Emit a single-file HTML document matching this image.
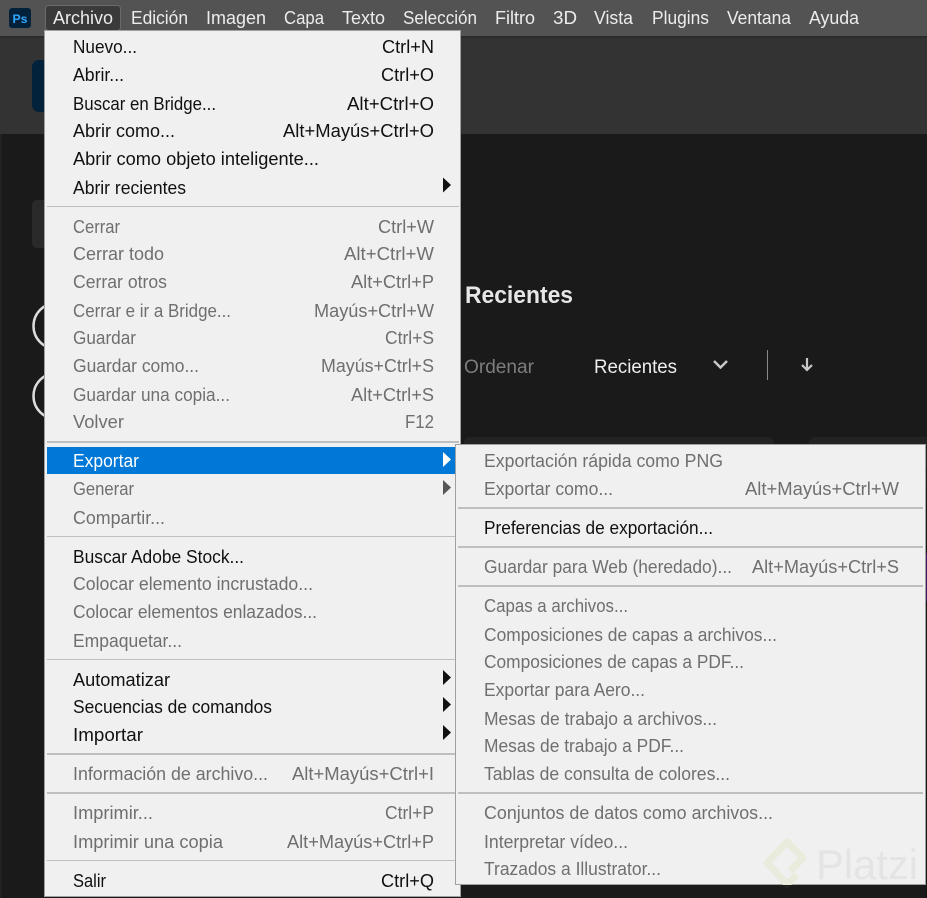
<!DOCTYPE html>
<html><head><meta charset="utf-8"><style>
html,body{margin:0;padding:0;background:#1a1a1a}
svg{display:block}
text{font-family:"Liberation Sans",sans-serif;font-size:18px}
.m text{fill:#ececec;font-size:18px}
.e{fill:#111}
.d{fill:#6f6f6f}
.w{fill:#fff}
</style></head><body>
<svg width="927" height="898" viewBox="0 0 927 898" xmlns="http://www.w3.org/2000/svg">
<defs>
<clipPath id="lt"><rect x="750" y="830" width="170" height="55"/></clipPath>
<clipPath id="dk"><rect x="750" y="886" width="170" height="12"/></clipPath>
</defs>
<rect width="927" height="898" fill="#1a1a1a"/>
<rect x="0" y="134" width="2" height="764" fill="#222"/>
<rect y="0" width="927" height="36" fill="#535353"/>
<rect y="36" width="927" height="98" fill="#333"/>
<rect y="36" width="927" height="2" fill="#2b2b2b"/>
<rect x="32" y="60" width="40" height="52" rx="7" fill="#02223c"/>
<rect x="32" y="200" width="40" height="48" rx="5" fill="#2a2a2a"/>
<circle cx="56.500" cy="326" r="23" fill="none" stroke="#dcdcdc" stroke-width="2.500"/>
<circle cx="56.500" cy="396" r="23" fill="none" stroke="#dcdcdc" stroke-width="2.500"/>
<rect x="464" y="437" width="310" height="30" rx="6" fill="#232323"/>
<rect x="809" y="437" width="130" height="30" rx="6" fill="#232323"/>
<rect x="926" y="486" width="1" height="412" fill="#141414"/>
<rect x="925" y="553" width="2" height="48" fill="#3a1a5a"/>
<text x="465" y="303" font-weight="bold" textLength="108" lengthAdjust="spacingAndGlyphs" style="font-size:24px" fill="#e6e6e6">Recientes</text>
<text x="464" y="373" textLength="70" lengthAdjust="spacingAndGlyphs" style="font-size:19px" fill="#7d7d7d">Ordenar</text>
<text x="594" y="373" textLength="83" lengthAdjust="spacingAndGlyphs" style="font-size:19px" fill="#eee">Recientes</text>
<path d="M714 361l6.500 6.500 6.500-6.500" fill="none" stroke="#c8c8c8" stroke-width="2.500"/>
<rect x="767" y="350" width="1" height="30" fill="#8a8a8a"/>
<path d="M807 358v12M802 365l5 5 5-5" fill="none" stroke="#c8c8c8" stroke-width="2.200"/>

<rect x="9" y="8" width="22" height="20" rx="3" fill="#02223c"/>
<text x="12.500" y="23" font-weight="bold" textLength="15" lengthAdjust="spacingAndGlyphs" style="font-size:12px" fill="#31a8ff">Ps</text>
<rect x="45.500" y="5.500" width="75" height="25" rx="3" fill="#3a3a3a" stroke="#6a6a6a"/>
<g class="m">
<text x="53" y="24" textLength="60" lengthAdjust="spacingAndGlyphs">Archivo</text>
<text x="131" y="24" textLength="57" lengthAdjust="spacingAndGlyphs">Edición</text>
<text x="206" y="24" textLength="60" lengthAdjust="spacingAndGlyphs">Imagen</text>
<text x="284" y="24" textLength="40" lengthAdjust="spacingAndGlyphs">Capa</text>
<text x="342" y="24" textLength="43" lengthAdjust="spacingAndGlyphs">Texto</text>
<text x="403" y="24" textLength="74" lengthAdjust="spacingAndGlyphs">Selección</text>
<text x="495" y="24" textLength="40" lengthAdjust="spacingAndGlyphs">Filtro</text>
<text x="553" y="24" textLength="24" lengthAdjust="spacingAndGlyphs">3D</text>
<text x="594" y="24" textLength="39" lengthAdjust="spacingAndGlyphs">Vista</text>
<text x="652" y="24" textLength="57" lengthAdjust="spacingAndGlyphs">Plugins</text>
<text x="727" y="24" textLength="64" lengthAdjust="spacingAndGlyphs">Ventana</text>
<text x="809" y="24" textLength="50" lengthAdjust="spacingAndGlyphs">Ayuda</text>
</g>

<rect x="44.500" y="30.500" width="416" height="866" fill="#f0f0f0" stroke="#a0a0a0"/>
<g fill="#bfbfbf">
<rect x="47" y="206" width="412" height="1"/>
<rect x="47" y="441" width="412" height="2"/>
<rect x="47" y="536" width="412" height="1"/>
<rect x="47" y="659" width="412" height="1"/>
<rect x="47" y="753" width="412" height="2"/>
<rect x="47" y="792" width="412" height="2"/>
<rect x="47" y="860" width="412" height="1"/>
</g>
<rect x="47" y="447" width="410" height="27" fill="#0078d7"/>

<g class="e">
<text x="73" y="53" textLength="64" lengthAdjust="spacingAndGlyphs">Nuevo...</text>
<text x="73" y="81" textLength="51" lengthAdjust="spacingAndGlyphs">Abrir...</text>
<text x="73" y="110" textLength="143" lengthAdjust="spacingAndGlyphs">Buscar en Bridge...</text>
<text x="73" y="137" textLength="102" lengthAdjust="spacingAndGlyphs">Abrir como...</text>
<text x="73" y="165" textLength="246" lengthAdjust="spacingAndGlyphs">Abrir como objeto inteligente...</text>
<text x="73" y="194" textLength="113" lengthAdjust="spacingAndGlyphs">Abrir recientes</text>
<text x="382" y="53" textLength="52" lengthAdjust="spacingAndGlyphs">Ctrl+N</text>
<text x="381" y="81" textLength="53" lengthAdjust="spacingAndGlyphs">Ctrl+O</text>
<text x="347" y="110" textLength="87" lengthAdjust="spacingAndGlyphs">Alt+Ctrl+O</text>
<text x="283" y="137" textLength="151" lengthAdjust="spacingAndGlyphs">Alt+Mayús+Ctrl+O</text>
<text x="73" y="563" textLength="171" lengthAdjust="spacingAndGlyphs">Buscar Adobe Stock...</text>
<text x="73" y="686" textLength="97" lengthAdjust="spacingAndGlyphs">Automatizar</text>
<text x="73" y="713" textLength="199" lengthAdjust="spacingAndGlyphs">Secuencias de comandos</text>
<text x="73" y="741" textLength="70" lengthAdjust="spacingAndGlyphs">Importar</text>
<text x="73" y="887" textLength="33" lengthAdjust="spacingAndGlyphs">Salir</text>
<text x="381" y="887" textLength="53" lengthAdjust="spacingAndGlyphs">Ctrl+Q</text>
</g>
<g class="d">
<text x="73" y="233" textLength="47" lengthAdjust="spacingAndGlyphs">Cerrar</text>
<text x="73" y="260" textLength="91" lengthAdjust="spacingAndGlyphs">Cerrar todo</text>
<text x="73" y="288" textLength="94" lengthAdjust="spacingAndGlyphs">Cerrar otros</text>
<text x="73" y="317" textLength="158" lengthAdjust="spacingAndGlyphs">Cerrar e ir a Bridge...</text>
<text x="73" y="344" textLength="63" lengthAdjust="spacingAndGlyphs">Guardar</text>
<text x="73" y="372" textLength="126" lengthAdjust="spacingAndGlyphs">Guardar como...</text>
<text x="73" y="401" textLength="157" lengthAdjust="spacingAndGlyphs">Guardar una copia...</text>
<text x="73" y="428" textLength="51" lengthAdjust="spacingAndGlyphs">Volver</text>
<text x="378" y="233" textLength="56" lengthAdjust="spacingAndGlyphs">Ctrl+W</text>
<text x="344" y="260" textLength="90" lengthAdjust="spacingAndGlyphs">Alt+Ctrl+W</text>
<text x="351" y="288" textLength="83" lengthAdjust="spacingAndGlyphs">Alt+Ctrl+P</text>
<text x="314" y="317" textLength="120" lengthAdjust="spacingAndGlyphs">Mayús+Ctrl+W</text>
<text x="385" y="344" textLength="49" lengthAdjust="spacingAndGlyphs">Ctrl+S</text>
<text x="321" y="372" textLength="113" lengthAdjust="spacingAndGlyphs">Mayús+Ctrl+S</text>
<text x="351" y="401" textLength="83" lengthAdjust="spacingAndGlyphs">Alt+Ctrl+S</text>
<text x="405" y="428" textLength="29" lengthAdjust="spacingAndGlyphs">F12</text>
<text x="73" y="495" textLength="61" lengthAdjust="spacingAndGlyphs">Generar</text>
<text x="73" y="524" textLength="92" lengthAdjust="spacingAndGlyphs">Compartir...</text>
<text x="73" y="590" textLength="240" lengthAdjust="spacingAndGlyphs">Colocar elemento incrustado...</text>
<text x="73" y="618" textLength="244" lengthAdjust="spacingAndGlyphs">Colocar elementos enlazados...</text>
<text x="73" y="647" textLength="109" lengthAdjust="spacingAndGlyphs">Empaquetar...</text>
<text x="73" y="780" textLength="195" lengthAdjust="spacingAndGlyphs">Información de archivo...</text>
<text x="292" y="780" textLength="142" lengthAdjust="spacingAndGlyphs">Alt+Mayús+Ctrl+I</text>
<text x="73" y="819" textLength="80" lengthAdjust="spacingAndGlyphs">Imprimir...</text>
<text x="385" y="819" textLength="49" lengthAdjust="spacingAndGlyphs">Ctrl+P</text>
<text x="73" y="848" textLength="150" lengthAdjust="spacingAndGlyphs">Imprimir una copia</text>
<text x="287" y="848" textLength="147" lengthAdjust="spacingAndGlyphs">Alt+Mayús+Ctrl+P</text>
</g>
<text class="w" x="73" y="467" textLength="66" lengthAdjust="spacingAndGlyphs">Exportar</text>
<path d="M443 177.500l8 7.500-8 7.500z" fill="#111"/>
<path d="M443 452l8 7.500-8 7.500z" fill="#fff"/>
<path d="M443 480l8 7.500-8 7.500z" fill="#555"/>
<path d="M443 670l8 7.500-8 7.500z" fill="#111"/>
<path d="M443 697l8 7.500-8 7.500z" fill="#111"/>
<path d="M443 725l8 7.500-8 7.500z" fill="#111"/>

<rect x="455.500" y="444.500" width="470" height="440" fill="#f0f0f0" stroke="#a0a0a0"/>
<g fill="#bfbfbf">
<rect x="458" y="507" width="465" height="2"/>
<rect x="458" y="546" width="465" height="2"/>
<rect x="458" y="585" width="465" height="2"/>
<rect x="458" y="792" width="465" height="2"/>
</g>
<g clip-path="url(#lt)"><path d="M790 871L803 858 787 842 767 863 787 884 797 875" fill="none" stroke="#e9ecdc" stroke-width="7" stroke-linejoin="round"/></g>
<g clip-path="url(#dk)"><path d="M767 863L787 884 797 875" fill="none" stroke="#2a2c20" stroke-width="7" stroke-linejoin="round"/></g>
<text x="816" y="879" textLength="102" lengthAdjust="spacingAndGlyphs" style="font-size:42px" fill="#e4e4e4">Platzi</text>
<g class="d">
<text x="484" y="467" textLength="239" lengthAdjust="spacingAndGlyphs">Exportación rápida como PNG</text>
<text x="484" y="495" textLength="129" lengthAdjust="spacingAndGlyphs">Exportar como...</text>
<text x="745" y="495" textLength="154" lengthAdjust="spacingAndGlyphs">Alt+Mayús+Ctrl+W</text>
<text x="484" y="573" textLength="248" lengthAdjust="spacingAndGlyphs">Guardar para Web (heredado)...</text>
<text x="752" y="573" textLength="147" lengthAdjust="spacingAndGlyphs">Alt+Mayús+Ctrl+S</text>
<text x="484" y="612" textLength="144" lengthAdjust="spacingAndGlyphs">Capas a archivos...</text>
<text x="484" y="641" textLength="293" lengthAdjust="spacingAndGlyphs">Composiciones de capas a archivos...</text>
<text x="484" y="668" textLength="260" lengthAdjust="spacingAndGlyphs">Composiciones de capas a PDF...</text>
<text x="484" y="696" textLength="161" lengthAdjust="spacingAndGlyphs">Exportar para Aero...</text>
<text x="484" y="725" textLength="233" lengthAdjust="spacingAndGlyphs">Mesas de trabajo a archivos...</text>
<text x="484" y="752" textLength="200" lengthAdjust="spacingAndGlyphs">Mesas de trabajo a PDF...</text>
<text x="484" y="780" textLength="246" lengthAdjust="spacingAndGlyphs">Tablas de consulta de colores...</text>
<text x="484" y="819" textLength="289" lengthAdjust="spacingAndGlyphs">Conjuntos de datos como archivos...</text>
<text x="484" y="848" textLength="144" lengthAdjust="spacingAndGlyphs">Interpretar vídeo...</text>
<text x="484" y="875" textLength="177" lengthAdjust="spacingAndGlyphs">Trazados a Illustrator...</text>
</g>
<text class="e" x="484" y="534" textLength="229" lengthAdjust="spacingAndGlyphs">Preferencias de exportación...</text>
</svg>
</body></html>
